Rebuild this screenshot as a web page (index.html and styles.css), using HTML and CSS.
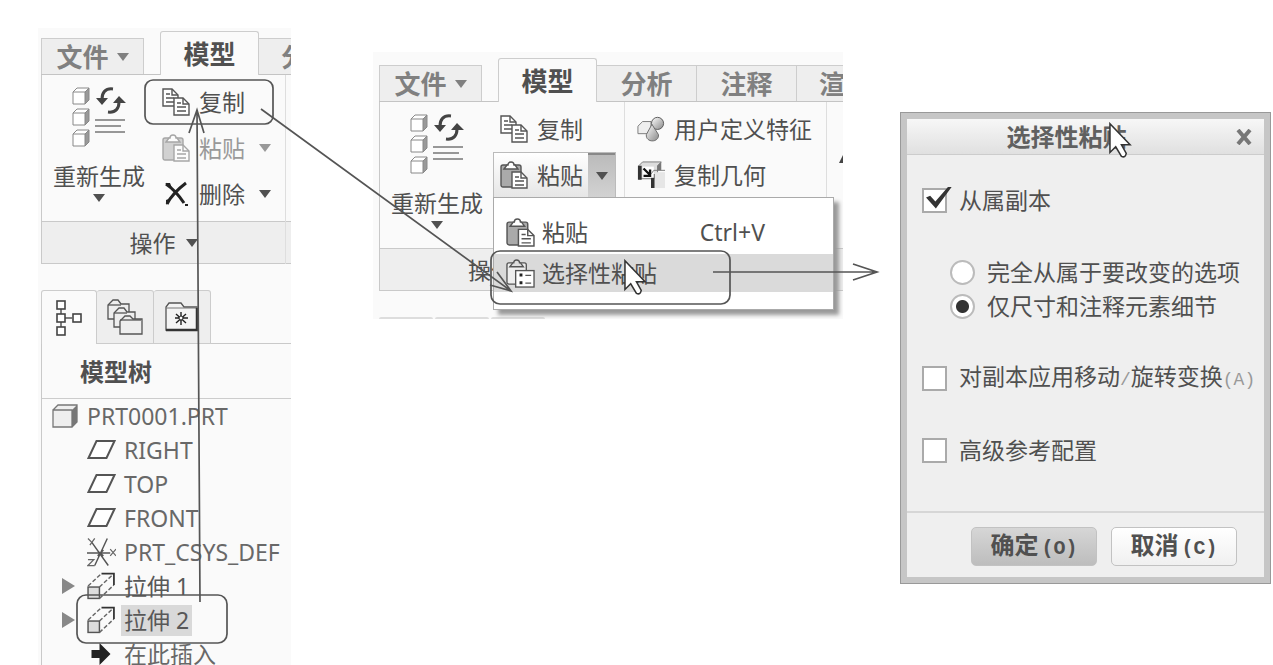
FILE: index.html
```html
<!DOCTYPE html>
<html lang="zh-CN">
<head>
<meta charset="utf-8">
<title>选择性粘贴</title>
<link rel="stylesheet" href="styles.css">
</head>
<body>
<svg class="defs" aria-hidden="true">
  <defs>
    <linearGradient id="shade" x1="0" y1="0" x2="1" y2="1"><stop offset="0" stop-color="#fff"/><stop offset="1" stop-color="#888"/></linearGradient>
    <symbol id="i-cube" viewBox="0 0 18 18"><path d="M1 5 5 1H17V13L13 17H1Z" fill="#fff"/><path d="M13 5 17 1V13L13 17Z" fill="#999"/><path d="M1 5H13V17H1ZM1 5 5 1H17V13L13 17M13 5 17 1" fill="none" stroke="#888"/></symbol>
    <symbol id="i-regen" viewBox="0 0 56 62">
      <use href="#i-cube" width="18" height="18" x="1" y="0"/><use href="#i-cube" width="18" height="18" x="1" y="21"/><use href="#i-cube" width="18" height="18" x="1" y="42"/>
      <path d="M42 2C34 1 31 6 31 12M37 25C45 26 48 21 48 15" fill="none" stroke="#444" stroke-width="3"/>
      <path d="M25 11H37L31 18ZM42 16H55L48 9Z" fill="#444"/>
      <path d="M24 33H54M24 39H50M24 45H54" stroke="#777" stroke-width="1.5"/>
    </symbol>
    <symbol id="i-copy" viewBox="0 0 28 28"><g fill="#fff" stroke="#555" stroke-width="1.4"><path d="M1 1H10L16 7V18H1Z"/><path d="M10 1V7H16M4 6H8M4 10H12M4 14H12" fill="none"/><path d="M12 10H21L27 16V27H12Z"/><path d="M21 10V16H27M15 15H19M15 19H24M15 23H24" fill="none"/></g></symbol>
    <symbol id="i-clip" viewBox="0 0 28 28"><rect x="1" y="4" width="20" height="22" rx="2" fill="#aaa" stroke="#555" stroke-width="1.4"/><path d="M4 8 7 4H8Q8 1 11 1T14 4H15L18 8Z" fill="#fff" stroke="#555" stroke-width="1.4"/><path d="M12 11H21L27 17V27H12Z" fill="#fff" stroke="#555" stroke-width="1.4"/><path d="M21 11V17H27M15 16H19M15 20H24M15 24H24" fill="none" stroke="#555" stroke-width="1.4"/></symbol>
    <symbol id="i-clipsp" viewBox="0 0 30 30"><rect x="1" y="4" width="20" height="22" rx="2" fill="#eee" stroke="#555" stroke-width="1.4"/><path d="M4 8 7 4H8Q8 1 11 1T14 4H15L18 8Z" fill="#ddd" stroke="#555" stroke-width="1.4"/><rect x="10" y="12" width="19" height="17" fill="#fff" stroke="#555" stroke-width="1.4"/><path d="M14 15H17V18H14ZM14 23H17V26H14Z" fill="#222"/><path d="M20 17H26M20 25H26" stroke="#555" stroke-width="1.4"/></symbol>
    <symbol id="i-del" viewBox="0 0 28 28"><path d="M4 4C10 8 16 14 22 23M24 3C16 9 9 16 5 24" fill="none" stroke="#222" stroke-width="3"/><path d="M3 3H8L10 8ZM4 25V20L9 18Z" fill="#222"/><path d="M23 25H26" stroke="#222" stroke-width="2"/></symbol>
    <symbol id="i-udf" viewBox="0 0 30 28"><path d="M1 19V11L6 6H15V19Z" fill="#eee" stroke="#777"/><circle cx="22" cy="8" r="6.500" fill="url(#shade)" stroke="#555"/><path d="M16 9 10 20C9 29 24 29 23 20Z" fill="url(#shade)" stroke="#666"/></symbol>
    <symbol id="i-geom" viewBox="0 0 30 30"><path d="M2 5 6 1H26L22 5V19H2Z" fill="#ddd" stroke="#777"/><path d="M22 5 26 1V10H22Z" fill="#777"/><path d="M3 5V20M17 14V29" stroke="#333" stroke-width="4"/><rect x="6" y="6" width="12" height="12" fill="#fff"/><path d="M7 8 14 15M14 9V16H7" fill="none" stroke="#111" stroke-width="2.500"/><path d="M15 14 18 10H30" fill="none" stroke="#777"/><path d="M19 12H30V29H19Z" fill="#e6e6e6"/></symbol>
    <symbol id="i-down" viewBox="0 0 12 8"><path d="M0 0H12L6 8Z" fill="currentColor"/></symbol>
    <symbol id="i-tree" viewBox="0 0 26 36"><path d="M5 9V27M9 18H16" stroke="#555" stroke-width="1.500"/><g fill="#fff" stroke="#444" stroke-width="1.600"><rect x="1" y="1" width="8" height="8"/><rect x="1" y="14" width="8" height="8"/><rect x="1" y="27" width="8" height="8"/><rect x="17" y="14" width="8" height="8"/></g></symbol>
    <symbol id="i-folders" viewBox="0 0 36 36"><g fill="#eee" stroke="#555" stroke-width="1.300"><path d="M1 20V6L4 3 6 1H11L14 5H22V20Z"/><path d="M1 6H14"/><path d="M7 28V14L10 11 12 9H17L20 13H28V28Z"/><path d="M7 14H20"/><path d="M13 35V22L16 19 18 17H23L26 20H35V35Z"/><path d="M13 21H34"/></g></symbol>
    <symbol id="i-fav" viewBox="0 0 34 30"><path d="M1 28V5L4 1H16L19 5H32V28Z" fill="#f4f4f4" stroke="#555" stroke-width="1.300"/><path d="M1 6H32" stroke="#777"/><path d="M1 28H32V6" fill="none" stroke="#333" stroke-width="2.500"/><path d="M16 10V23M10 16H23M11 12 21 21M21 12 11 21" stroke="#222" stroke-width="1.400"/><circle cx="16" cy="16" r="2" fill="#fff" stroke="#222"/></symbol>
    <symbol id="i-part" viewBox="0 0 26 24"><path d="M1 6 6 1H25V18L20 23H1Z" fill="#eee"/><path d="M20 6 25 1V18L20 23Z" fill="#777"/><path d="M1 6H20V23H1ZM1 6 6 1H25V18L20 23" fill="none" stroke="#777" stroke-width="1.300"/></symbol>
    <symbol id="i-plane" viewBox="0 0 28 20"><path d="M9 1H27L19 18H1Z" fill="#fff" stroke="#555" stroke-width="2"/></symbol>
    <symbol id="i-csys" viewBox="0 0 30 30"><path d="M0 16H24M8 29 21 1M5 5 22 29M11 14 17 19M11 19 17 13" fill="none" stroke="#555" stroke-width="1.500"/><path d="M1 1 5 5M8 1 3 8M24 12 30 19M30 12 24 19M1 23H7L1 29H8" fill="none" stroke="#666" stroke-width="1.300"/></symbol>
    <symbol id="i-extrude" viewBox="0 0 28 26"><rect x="1" y="14" width="11" height="11" fill="#ddd" stroke="#555" stroke-width="1.400"/><path d="M1 13 14 1M12 14 25 2M12 25 26 12" fill="none" stroke="#666" stroke-width="1.400" stroke-dasharray="4 2"/><path d="M14 1H26V12" fill="none" stroke="#333" stroke-width="1.700"/></symbol>
    <symbol id="i-insert" viewBox="0 0 20 22"><path d="M0 7H8V0L19 11 8 22V15H0Z" fill="#222"/></symbol>
    <symbol id="i-cursor" viewBox="0 0 24 38"><path d="M1 1V31L7 25 13 35Q17 37 18 32L13 23H22Z" fill="#fff" stroke="#333" stroke-width="1.600"/></symbol>
  </defs>
</svg>

<main class="stage">
  <section class="panel panel-model">
    <nav class="tabs">
      <button class="tab tab-file">文件<svg class="caret"><use href="#i-down"/></svg></button>
      <button class="tab active">模型</button>
      <button class="tab tab-cut">分析</button>
    </nav>
    <div class="ribbon">
      <div class="group group-ops">
        <div class="group-body">
          <button class="regen"><svg class="regen-icon"><use href="#i-regen"/></svg><span>重新生成</span><svg class="caret"><use href="#i-down"/></svg></button>
          <div class="commands">
            <button class="cmd"><svg class="icon"><use href="#i-copy"/></svg>复制</button>
            <button class="cmd muted"><svg class="icon"><use href="#i-clip"/></svg>粘贴<svg class="caret"><use href="#i-down"/></svg></button>
            <button class="cmd"><svg class="icon"><use href="#i-del"/></svg>删除<svg class="caret"><use href="#i-down"/></svg></button>
          </div>
        </div>
        <button class="group-label">操作<svg class="caret"><use href="#i-down"/></svg></button>
      </div>
      <div class="group group-edge"><div class="group-body"></div><div class="group-label"></div></div>
    </div>
    <nav class="tree-tabs">
      <button class="tree-tab active" aria-label="模型树"><svg class="ic-tree"><use href="#i-tree"/></svg></button>
      <button class="tree-tab" aria-label="文件夹"><svg class="ic-folders"><use href="#i-folders"/></svg></button>
      <button class="tree-tab" aria-label="收藏夹"><svg class="ic-fav"><use href="#i-fav"/></svg></button>
    </nav>
    <div class="tree">
      <h2 class="tree-title">模型树</h2>
      <ul class="tree-list">
        <li class="root"><svg class="ic-part"><use href="#i-part"/></svg>PRT0001.PRT</li>
        <li><svg class="ic-node"><use href="#i-plane" height="20" y="5"/></svg>RIGHT</li>
        <li><svg class="ic-node"><use href="#i-plane" height="20" y="5"/></svg>TOP</li>
        <li><svg class="ic-node"><use href="#i-plane" height="20" y="5"/></svg>FRONT</li>
        <li><svg class="ic-node"><use href="#i-csys"/></svg>PRT_CSYS_DEF</li>
        <li class="branch"><i class="twisty"></i><svg class="ic-node"><use href="#i-extrude"/></svg>拉伸 1</li>
        <li class="branch"><i class="twisty"></i><svg class="ic-node"><use href="#i-extrude"/></svg><span class="selected">拉伸 2</span></li>
        <li><svg class="ic-node"><use href="#i-insert" height="22" y="4"/></svg>在此插入</li>
      </ul>
    </div>
  </section>

  <section class="panel panel-paste">
    <nav class="tabs">
      <button class="tab tab-file">文件<svg class="caret"><use href="#i-down"/></svg></button>
      <button class="tab active">模型</button>
      <button class="tab">分析</button>
      <button class="tab">注释</button>
      <button class="tab tab-cut">渲</button>
    </nav>
    <div class="ribbon">
      <div class="group group-ops">
        <div class="group-body">
          <button class="regen"><svg class="regen-icon"><use href="#i-regen"/></svg><span>重新生成</span><svg class="caret"><use href="#i-down"/></svg></button>
          <div class="commands">
            <button class="cmd"><svg class="icon"><use href="#i-copy"/></svg>复制</button>
            <div class="split">
              <button class="cmd"><svg class="icon"><use href="#i-clip"/></svg>粘贴</button>
              <button class="split-arrow" aria-label="更多"><svg class="caret"><use href="#i-down"/></svg></button>
              <div class="menu">
                <button class="menu-item"><svg class="menu-icon"><use href="#i-clip"/></svg>粘贴<kbd>Ctrl+V</kbd></button>
                <button class="menu-item hover"><svg class="menu-icon"><use href="#i-clipsp"/></svg>选择性粘贴</button>
              </div>
            </div>
          </div>
        </div>
        <button class="group-label">操作<svg class="caret"><use href="#i-down"/></svg></button>
      </div>
      <div class="group group-data">
        <div class="group-body"><div class="commands">
          <button class="cmd"><svg class="icon"><use href="#i-udf"/></svg>用户定义特征</button>
          <button class="cmd"><svg class="icon"><use href="#i-geom"/></svg>复制几何</button>
        </div></div>
        <div class="group-label"></div>
      </div>
      <div class="group group-edge"><div class="group-body"><svg class="edge-mark" viewBox="0 0 4 8"><path d="M4 0V8H0Z" fill="#444"/></svg></div><div class="group-label"></div></div>
    </div>
    <div class="tab-stubs"><i></i><i></i><i></i></div>
  </section>

  <form class="dialog">
    <header class="dialog-head"><h1>选择性粘贴</h1><button type="button" class="close" aria-label="关闭"><svg viewBox="0 0 16 16"><path d="M2 1 14 15M14 1 2 15" stroke="#777" stroke-width="4"/></svg></button></header>
    <div class="dialog-body">
      <label class="opt"><input type="checkbox" checked>从属副本</label>
      <div class="radios">
        <label class="opt"><input type="radio" name="dep">完全从属于要改变的选项</label>
        <label class="opt"><input type="radio" name="dep" checked>仅尺寸和注释元素细节</label>
      </div>
      <label class="opt"><input type="checkbox"><span>对副本应用移动<span class="half">/</span>旋转变换<span class="half">(A)</span></span></label>
      <label class="opt"><input type="checkbox">高级参考配置</label>
    </div>
    <footer class="dialog-foot">
      <button type="button" class="btn primary">确定<span class="key">(O)</span></button>
      <button type="button" class="btn">取消<span class="key">(C)</span></button>
    </footer>
  </form>

  <svg class="notes" viewBox="0 0 1273 665" preserveAspectRatio="none" aria-hidden="true">
    <g fill="none" stroke="#555" stroke-width="1.700">
      <rect x="145" y="80" width="128" height="44" rx="8"/>
      <rect x="77" y="595" width="150" height="48" rx="9"/>
      <rect x="491" y="251" width="239" height="53" rx="9"/>
      <path d="M200 602 197 111M189 133 197 110 204 133"/>
      <path d="M261 109 511 291M497 272 511 291 490 285"/>
      <path d="M713 272H876M853 264 877 272 853 280"/>
    </g>
    <use href="#i-cursor" x="624" y="259" width="23" height="38"/>
    <use href="#i-cursor" x="1109" y="122" width="23" height="38"/>
  </svg>
</main>
</body>
</html>
```
FILE: styles.css
```css
* { box-sizing: border-box; }
body {
  margin: 0;
  background: #fff;
  color: #505050;
  font-family: "Noto Sans", "Noto Sans CJK SC", sans-serif;
  font-size: 23px;
  line-height: 34px;
}
button {
  margin: 0;
  padding: 0;
  border: 0;
  background: none;
  color: inherit;
  font: inherit;
  white-space: nowrap;
}
svg { flex: none; }
.defs { position: absolute; width: 0; height: 0; }
.stage {
  position: relative;
  display: grid;
  grid-template-columns: minmax(0, 253fr) 82px minmax(0, 470fr) 57px minmax(0, 371fr);
  align-items: start;
  height: 100vh;
  min-height: 665px;
  padding: 0 2px 0 38px;
  overflow: hidden;
}
.notes { position: absolute; left: 0; top: 0; width: 100%; height: 665px; pointer-events: none; }
.panel { min-width: 0; background: #fafafa; }
.panel-model { grid-column: 1; margin-top: 28px; padding-left: 3px; }
.panel-paste { grid-column: 3; grid-row: 1; margin-top: 52px; padding-left: 6px; }
.panel-model { grid-row: 1; }

.caret { width: 12px; height: 8px; }
.icon { width: 28px; height: 28px; }

.tabs {
  display: flex;
  align-items: flex-end;
  height: 47px;
  border-bottom: 1px solid #c4c4c4;
  overflow: clip;
  overflow-clip-margin: 1px;
}
.panel-paste .tabs { height: 50px; }
.panel-model .tabs, .panel-paste .tabs { clip-path: inset(0 0 -1px 0); }
.tab {
  flex: none;
  width: 100px;
  height: 36px;
  border: 1px solid #cdcdcd;
  border-width: 1px 1px 0 0;
  background: #eee;
  color: #808080;
  font-size: 26px;
  font-weight: 700;
}
.tab-cut { padding-left: 22px; text-align: left; }
.tab-file {
  display: flex;
  align-items: center;
  justify-content: center;
  gap: 8px;
  width: 103px;
  margin-right: 16px;
  border-left-width: 1px;
}
.tab.active {
  width: 99px;
  height: 44px;
  margin-bottom: -1px;
  border-left-width: 1px;
  border-radius: 3px 3px 0 0;
  background: #fafafa;
  color: #505050;
}

.ribbon { display: flex; border-left: 1px solid #c9c9c9; }
.group { display: flex; flex-direction: column; border-right: 1px solid #dedede; }
.group-ops { width: 245px; }
.group-data { width: 202px; }
.group-edge { flex: 1; border-right: 0; }
.edge-mark { width: 4px; height: 8px; margin: 53px 0 0 auto; }
.group-body { display: flex; height: 146px; }
.group-label {
  display: flex;
  align-items: center;
  justify-content: center;
  gap: 10px;
  height: 43px;
  border: 1px solid #c9c9c9;
  border-width: 1px 0;
  background: #eee;
}
.regen {
  display: flex;
  flex-direction: column;
  align-items: center;
  width: 114px;
  padding-top: 12px;
}
.regen-icon { width: 56px; height: 62px; }
.regen span { margin-top: 10px; }
.regen .caret { margin-top: 1px; }
.commands { display: flex; flex: 1; flex-direction: column; padding-top: 4px; }
.cmd {
  display: flex;
  align-items: center;
  gap: 9px;
  height: 46px;
  padding: 0 14px 0 6px;
}
.cmd .caret { margin-left: auto; }
.muted { color: #999; }
.muted .icon { opacity: .5; }
.group-data .cmd { padding-left: 12px; }
.panel-model .group-ops { width: 244px; }

.split {
  position: relative;
  display: flex;
  width: 123px;
  height: 46px;
  margin-left: -1px;
  border: 1px solid #bbb;
  background: linear-gradient(#fff, #e6e6e6);
}
.split .cmd { height: 44px; padding: 0 0 0 6px; }
.split-arrow {
  display: flex;
  align-items: center;
  justify-content: center;
  width: 27px;
  margin-left: auto;
  border-top: 2px solid #888;
  background: linear-gradient(#bbb, #d2d2d2);
}
.menu {
  position: absolute;
  left: -1px;
  top: 100%;
  width: 341px;
  height: 113px;
  padding-top: 12px;
  border: 1px solid #aaa;
  background: #fff;
  box-shadow: 5px 5px 4px #999;
}
.menu-item {
  display: flex;
  align-items: center;
  gap: 7px;
  width: 100%;
  height: 44px;
  padding-left: 12px;
}
.menu-item.hover { height: 38px; background: #dadada; }
.menu-icon { width: 29px; height: 29px; }
kbd { margin: 0 68px 0 auto; font: inherit; }
.tab-stubs { display: flex; gap: 2px; height: 28px; align-items: flex-end; }
.tab-stubs i { width: 54px; border-top: 2px solid #ddd; border-radius: 3px 3px 0 0; }

.tree-tabs { display: flex; margin-top: 26px; }
.tree-tabs::after { content: ""; flex: 1; border-bottom: 1px solid #c9c9c9; }
.tree-tab {
  display: flex;
  align-items: center;
  justify-content: center;
  width: 57px;
  height: 54px;
  border: 1px solid #ccc;
  border-left-width: 0;
  border-radius: 3px 3px 0 0;
  background: #eee;
}
.tree-tab.active { width: 56px; border-left-width: 1px; border-bottom: 0; background: #fafafa; }
.ic-tree { width: 26px; height: 36px; }
.ic-folders { width: 36px; height: 36px; }
.ic-fav { width: 34px; height: 30px; }
.tree { border-left: 1px solid #c9c9c9; }
.tree-title {
  margin: 0;
  padding: 11px 0 9px 38px;
  border-bottom: 1px solid #ccc;
  font-size: 24px;
  line-height: 34px;
}
.tree-list { margin: 0; padding: 0; list-style: none; color: #686868; }
.tree-list li { display: flex; align-items: center; gap: 8px; height: 34px; padding-left: 45px; white-space: nowrap; }
.tree-list .root { padding-left: 10px; gap: 9px; }
.tree-list .branch { padding-left: 20px; color: #585858; }
.ic-part { width: 26px; height: 24px; }
.ic-node { width: 29px; height: 30px; }
.twisty { margin-right: 4px; border: 7px solid transparent; border-width: 8px 0 8px 13px; border-left-color: #888; }
.selected { margin-left: -3px; padding: 0 3px; background: #d9d9d9; line-height: 31px; }

.dialog {
  grid-column: 5;
  grid-row: 1;
  min-width: 0;
  margin-top: 112px;
  border: 1px solid #999;
  outline: 6px solid #c6c6c6;
  outline-offset: -7px;
  padding: 6px;
  background: #efefef;
}
.dialog-head {
  display: flex;
  align-items: center;
  height: 36px;
  padding: 0 12px 0 0;
  border-bottom: 1px solid #ccc;
  background: linear-gradient(#f7f7f7, #e0e0e0);
}
.dialog-head h1 { flex: 1; margin: 0 10px 0 0; font-size: 24px; line-height: 34px; text-align: center; color: #606060; }
.close { display: flex; padding: 0; }
.close svg { width: 16px; height: 16px; }
.dialog-body { padding: 28px 0 44px 15px; border-bottom: 2px solid #d6d6d6; }
.opt { display: flex; align-items: center; gap: 12px; height: 34px; white-space: nowrap; }
.radios { padding: 38px 0 38px 28px; }
.opt + .opt { margin-top: 38px; }
.radios .opt + .opt { margin-top: 0; }
.opt input {
  appearance: none;
  flex: none;
  width: 25px;
  height: 25px;
  margin: 0;
  border: 2px solid #aaa;
  background: #fff;
}
.opt input[type="checkbox"]:checked {
  position: relative;
}
.opt input[type="checkbox"]:checked::after {
  content: "";
  position: absolute;
  left: 2px;
  top: -3px;
  width: 26px;
  height: 22px;
  background: #333;
  clip-path: polygon(0 50%, 16% 42%, 36% 68%, 86% 0, 100% 0, 38% 100%);
}
.opt input[type="radio"] { border-color: #bbb; border-radius: 50%; }
.opt input[type="radio"]:checked { background: radial-gradient(circle, #333 0 6px, #fff 7px); }
.half { color: #999; font-family: "Liberation Mono", monospace; font-size: 18px; }
.dialog-foot { display: flex; justify-content: flex-end; gap: 14px; padding: 14px 27px 11px 0; }
.btn {
  width: 126px;
  height: 39px;
  border: 1px solid #c2c2c2;
  border-radius: 5px;
  background: linear-gradient(#fff, #f0f0f0);
  font-size: 24px;
  font-weight: 700;
  line-height: 34px;
}
.btn.primary { background: linear-gradient(#d6d6d6, #bdbdbd); }
.key { margin-left: 3px; font-family: "Liberation Mono", monospace; font-size: 20px; }
```
